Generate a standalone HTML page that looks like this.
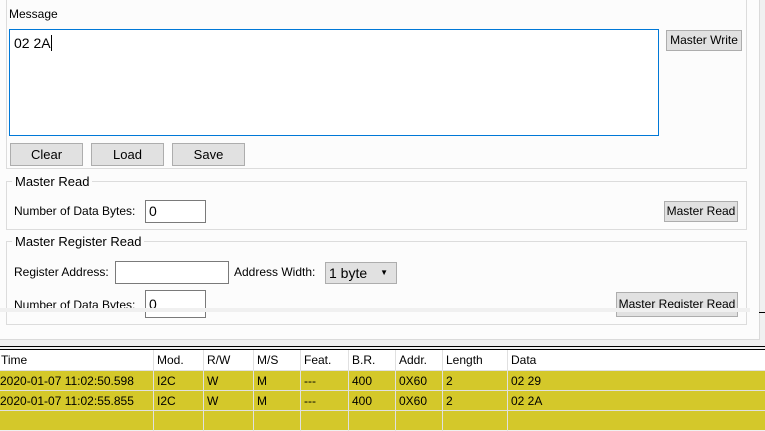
<!DOCTYPE html>
<html><head><style>
*{box-sizing:border-box;margin:0;padding:0}
body{width:765px;height:416px;overflow:hidden;background:#f0f0f0;font-family:"Liberation Sans",sans-serif;font-size:12px;color:#000;position:relative}
.a{position:absolute}
.btn{position:absolute;background:#e1e1e1;border:1px solid #adadad;text-align:center;font-size:12px;line-height:19px;color:#000}
.grp{position:absolute;border:1px solid #dcdcdc}
.gt{position:absolute;background:#fcfcfc;padding:0 3px;font-size:13px;line-height:15px}
.inp{position:absolute;background:#fff;border:1px solid #7a7a7a;padding-left:3px;font-size:13px}
.row{position:absolute;left:0;width:765px;height:20px;line-height:20px;font-size:12px}
.row span{position:absolute;top:0;height:20px;padding-left:3px;border-left:1px solid #e0e0e0}
</style></head><body>
<div class="a" style="left:0;top:0;width:760px;height:340px;background:#fcfcfc;border-right:1px solid #dadada;border-bottom:1px solid #dadada"></div>
<div class="a" style="left:6px;top:0;width:741px;height:169px;border:1px solid #dcdcdc;border-top:none"></div>
<div class="a" style="left:9px;top:7px">Message</div>
<div class="a" style="left:9px;top:29px;width:650px;height:107px;background:#fff;border:1px solid #0078d7"></div>
<div class="a" style="left:14px;top:35px;font-size:14px">02 2A<span style="display:inline-block;width:1px;height:16px;background:#000;vertical-align:-3px"></span></div>
<div class="btn" style="left:10px;top:143px;width:73px;height:23px;line-height:22px;font-size:13px">Clear</div>
<div class="btn" style="left:91px;top:143px;width:73px;height:23px;line-height:22px;font-size:13px">Load</div>
<div class="btn" style="left:172px;top:143px;width:73px;height:23px;line-height:22px;font-size:13px">Save</div>
<div class="btn" style="left:666px;top:30px;width:76px;height:21px">Master Write</div>

<div class="grp" style="left:6px;top:181px;width:741px;height:49px"></div>
<div class="gt" style="left:12px;top:174px">Master Read</div>
<div class="a" style="left:14px;top:204px">Number of Data Bytes:</div>
<div class="inp" style="left:145px;top:200px;width:61px;height:23px;line-height:21px;font-size:14px">0</div>
<div class="btn" style="left:664px;top:201px;width:74px;height:21px">Master Read</div>

<div class="grp" style="left:6px;top:241px;width:741px;height:84px"></div>
<div class="gt" style="left:12px;top:234px">Master Register Read</div>
<div class="a" style="left:14px;top:265px">Register Address:</div>
<div class="inp" style="left:115px;top:261px;width:114px;height:23px"></div>
<div class="a" style="left:234px;top:265px">Address Width:</div>
<div class="a" style="left:325px;top:262px;width:72px;height:22px;background:#e1e1e1;border:1px solid #adadad;font-size:14px;line-height:20px;padding-left:3px">1 byte<span style="position:absolute;right:8px;top:0;font-size:8px">▼</span></div>
<div class="a" style="left:14px;top:298px">Number of Data Bytes:</div>
<div class="inp" style="left:145px;top:290px;width:61px;height:28px;line-height:26px;font-size:14px">0</div>
<div class="btn" style="left:616px;top:292px;width:122px;height:25px;line-height:23px">Master Register Read</div>
<div class="a" style="left:0;top:308px;width:750px;height:4px;background:#f0f0f0"></div>
<div class="a" style="left:759px;top:312px;width:6px;height:1px;background:#000"></div>

<div class="a" style="left:0;top:346px;width:765px;height:1px;background:#000"></div>
<div class="a" style="left:0;top:349px;width:765px;height:1px;background:#000"></div>
<div class="row" style="top:350px;background:#fff">
<span style="left:-2px;border:none">Time</span><span style="left:153px">Mod.</span><span style="left:203px">R/W</span><span style="left:253px">M/S</span><span style="left:300px">Feat.</span><span style="left:348px">B.R.</span><span style="left:395px">Addr.</span><span style="left:442px">Length</span><span style="left:507px">Data</span></div>
<div class="row" style="top:370px;background:#d4c82a;border-top:1px solid #e0e0e0">
<span style="left:-3px;border:none">2020-01-07 11:02:50.598</span><span style="left:153px">I2C</span><span style="left:203px">W</span><span style="left:253px">M</span><span style="left:300px">---</span><span style="left:348px">400</span><span style="left:395px">0X60</span><span style="left:442px">2</span><span style="left:507px">02 29</span></div>
<div class="row" style="top:390px;background:#d4c82a;border-top:1px solid #e0e0e0">
<span style="left:-3px;border:none">2020-01-07 11:02:55.855</span><span style="left:153px">I2C</span><span style="left:203px">W</span><span style="left:253px">M</span><span style="left:300px">---</span><span style="left:348px">400</span><span style="left:395px">0X60</span><span style="left:442px">2</span><span style="left:507px">02 2A</span></div>
<div class="row" style="top:410px;background:#d4c82a;border-top:1px solid #e0e0e0">
<span style="left:-2px;border:none"></span><span style="left:153px"></span><span style="left:203px"></span><span style="left:253px"></span><span style="left:300px"></span><span style="left:348px"></span><span style="left:395px"></span><span style="left:442px"></span><span style="left:507px"></span></div>
</body></html>
